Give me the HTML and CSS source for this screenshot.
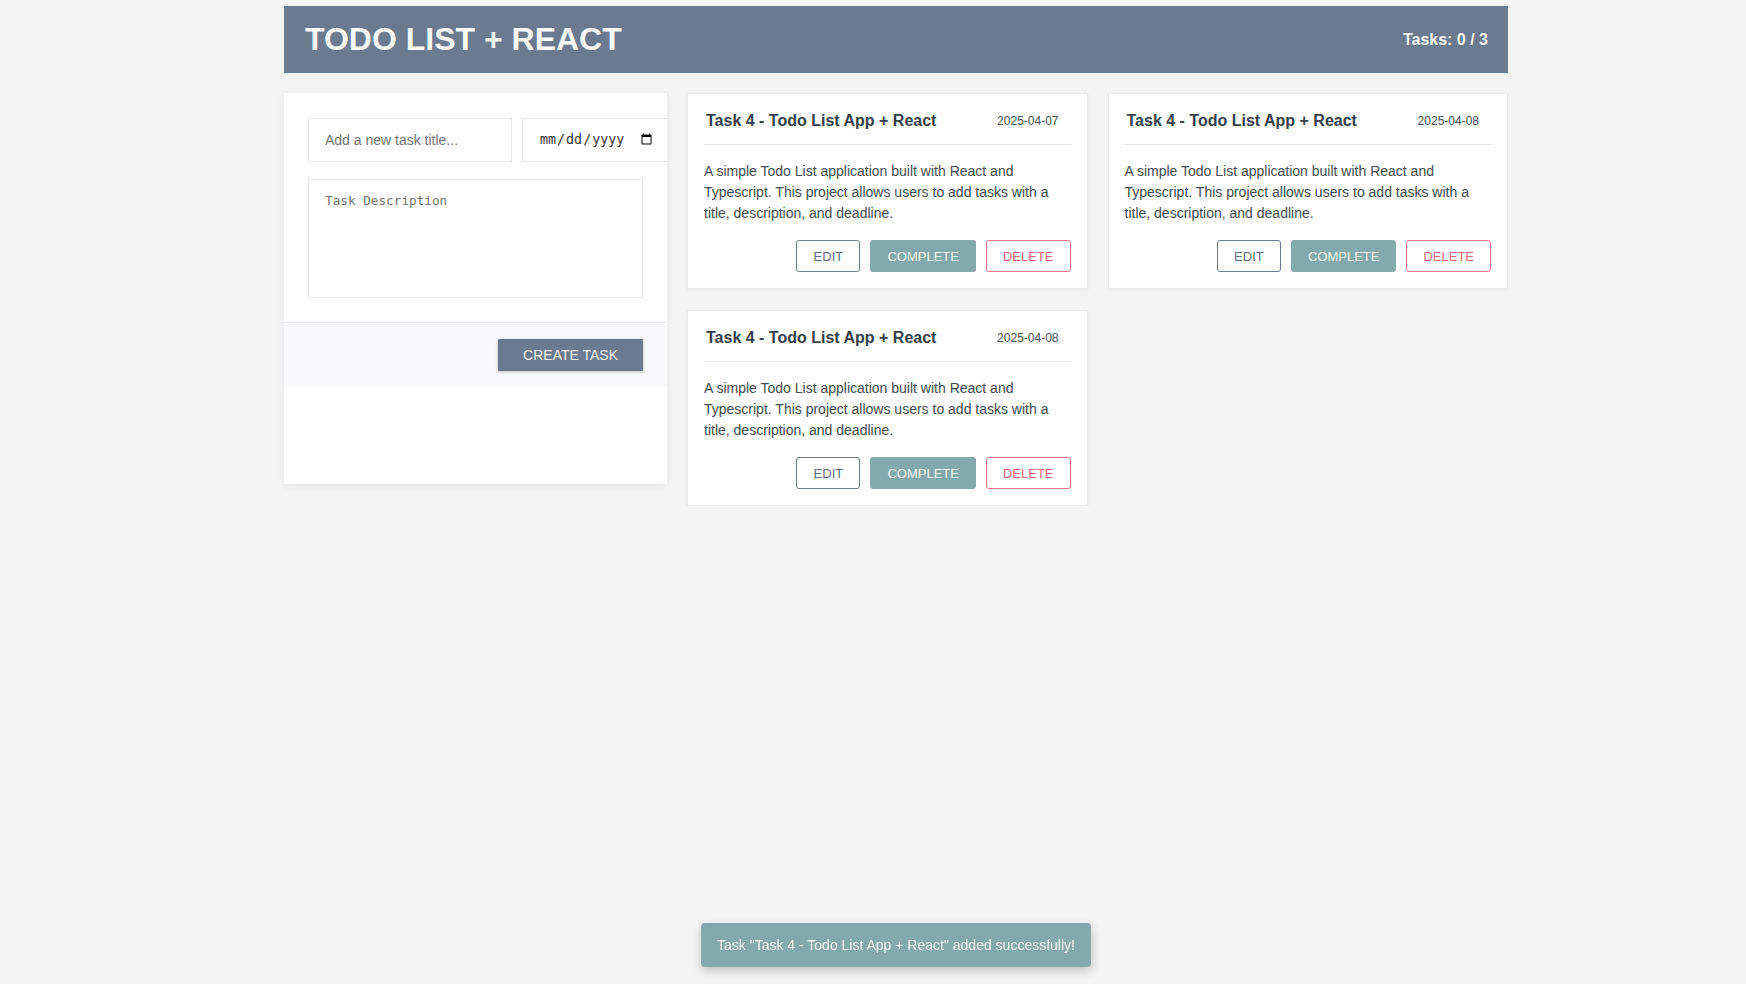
FILE: index.html
```html
<!DOCTYPE html>
<html lang="en">
<head>
<meta charset="utf-8">
<title>Todo List + React</title>
<link rel="stylesheet" href="styles.css">
</head>
<body>
<div class="app">
  <header class="header">
    <h1 class="header-title">TODO LIST + REACT</h1>
    <div class="header-count">Tasks: 0 / 3</div>
  </header>
  <main class="main">
    <section class="panel">
      <div class="panel-body">
        <div class="input-row">
          <input class="input-title" type="text" placeholder="Add a new task title...">
          <input class="input-date" type="date">
        </div>
        <textarea class="input-desc" placeholder="Task Description"></textarea>
      </div>
      <div class="panel-footer">
        <button class="btn-create">CREATE TASK</button>
      </div>
    </section>
    <section class="cards">
      <article class="card">
        <div class="card-head">
          <h2 class="card-title">Task 4 - Todo List App + React</h2>
          <span class="card-date">2025-04-07</span>
        </div>
        <p class="card-desc">A simple Todo List application built with React and Typescript. This project allows users to add tasks with a title, description, and deadline.</p>
        <div class="card-actions">
          <button class="btn btn-edit">EDIT</button>
          <button class="btn btn-complete">COMPLETE</button>
          <button class="btn btn-delete">DELETE</button>
        </div>
      </article>
      <article class="card">
        <div class="card-head">
          <h2 class="card-title">Task 4 - Todo List App + React</h2>
          <span class="card-date">2025-04-08</span>
        </div>
        <p class="card-desc">A simple Todo List application built with React and Typescript. This project allows users to add tasks with a title, description, and deadline.</p>
        <div class="card-actions">
          <button class="btn btn-edit">EDIT</button>
          <button class="btn btn-complete">COMPLETE</button>
          <button class="btn btn-delete">DELETE</button>
        </div>
      </article>
      <article class="card">
        <div class="card-head">
          <h2 class="card-title">Task 4 - Todo List App + React</h2>
          <span class="card-date">2025-04-08</span>
        </div>
        <p class="card-desc">A simple Todo List application built with React and Typescript. This project allows users to add tasks with a title, description, and deadline.</p>
        <div class="card-actions">
          <button class="btn btn-edit">EDIT</button>
          <button class="btn btn-complete">COMPLETE</button>
          <button class="btn btn-delete">DELETE</button>
        </div>
      </article>
    </section>
  </main>
</div>
<div class="toast">Task "Task 4 - Todo List App + React" added successfully!</div>
</body>
</html>
```

FILE: styles.css
```css
* { box-sizing: border-box; }

body {
  margin: 0;
  background: #f4f4f4;
  font-family: "Liberation Sans", Arial, sans-serif;
  color: #333;
}

.app {
  width: 1224px;
  margin: 6px 0 0 284px;
}

.header {
  display: flex;
  justify-content: space-between;
  align-items: center;
  height: 67px;
  padding: 0 20px 0 21px;
  background: #6b7a8f;
  color: #fafafa;
}

.header-title {
  margin: 0;
  font-size: 32px;
  font-weight: bold;
}

.header-count {
  font-size: 16px;
  font-weight: bold;
}

.main {
  display: grid;
  grid-template-columns: 383px 1fr;
  gap: 20px;
  margin-top: 20px;
  align-items: start;
}

.panel {
  height: 391px;
  background: #fff;
  overflow: hidden;
  box-shadow: 0 2px 8px rgba(0, 0, 0, 0.06);
}

.panel-body {
  padding: 25px 24px 24px;
  display: flex;
  flex-direction: column;
  gap: 17px;
}

.input-row {
  display: flex;
  gap: 10px;
}

.input-title,
.input-date,
.input-desc {
  border: 1px solid #e5e7eb;
  background: #fff;
  outline: none;
}

.input-title {
  width: 204px;
  flex-shrink: 0;
  height: 44px;
  padding: 0 16px;
  font-family: "Liberation Sans", Arial, sans-serif;
  font-size: 14px;
  color: #333;
}

.input-title::placeholder { color: #757575; }

.input-date {
  width: 150px;
  flex-shrink: 0;
  height: 44px;
  padding: 0 16px;
  font-family: "DejaVu Sans Mono", monospace;
  font-size: 13.33px;
  color: #333;
}

.input-desc {
  width: 100%;
  height: 119px;
  padding: 13px 16px;
  resize: none;
  font-family: "DejaVu Sans Mono", monospace;
  font-size: 12.7px;
  color: #333;
}

.input-desc::placeholder { color: #757575; }

.panel-footer {
  display: flex;
  justify-content: flex-end;
  padding: 16px 24px;
  background: #f8f9fa;
  border-top: 1px solid #e5e7eb;
}

.btn-create {
  height: 32px;
  padding: 0 25px;
  border: none;
  border-radius: 1px;
  background: #6b7a8f;
  color: #f4f4f4;
  font-family: "Liberation Sans", Arial, sans-serif;
  font-size: 14px;
  box-shadow: 0 1px 3px rgba(0, 0, 0, 0.25);
}

.cards {
  display: grid;
  grid-template-columns: 1fr 1fr;
  gap: 21px 20px;
  align-items: start;
}

.card {
  background: #fff;
  border: 1px solid #ececec;
  box-shadow: 0 1px 4px rgba(0, 0, 0, 0.05);
  padding: 16px;
}

.card-head {
  display: flex;
  justify-content: space-between;
  align-items: center;
  padding: 2px 12px 14px 2px;
  border-bottom: 1px solid #e5e7eb;
}

.card-title {
  margin: 0;
  font-size: 16px;
  font-weight: bold;
  color: #363e4b;
}

.card-date {
  font-size: 12px;
  color: #4b5058;
}

.card-desc {
  margin: 16px 0;
  font-size: 14px;
  line-height: 21px;
  color: #454b54;
}

.card-actions {
  display: flex;
  justify-content: flex-end;
  gap: 10px;
}

.btn {
  height: 32px;
  min-width: 64px;
  padding: 0 16px;
  border-radius: 3px;
  font-family: "Liberation Sans", Arial, sans-serif;
  font-size: 13px;
  background: #fff;
}

.btn-edit {
  border: 1px solid #6b7a8f;
  color: #5f6d82;
}

.btn-complete {
  border: 1px solid #84a9ac;
  background: #84a9ac;
  color: #f2f5f6;
}

.btn-delete {
  border: 1px solid #f67280;
  color: #f26a79;
}

.toast {
  position: fixed;
  left: 896px;
  bottom: 17px;
  transform: translateX(-50%);
  height: 44px;
  line-height: 44px;
  padding: 0 16px;
  white-space: nowrap;
  background: #84a9ac;
  color: #f6f8f8;
  font-size: 14px;
  border-radius: 4px;
  box-shadow: 0 4px 10px rgba(0, 0, 0, 0.2);
}
```
